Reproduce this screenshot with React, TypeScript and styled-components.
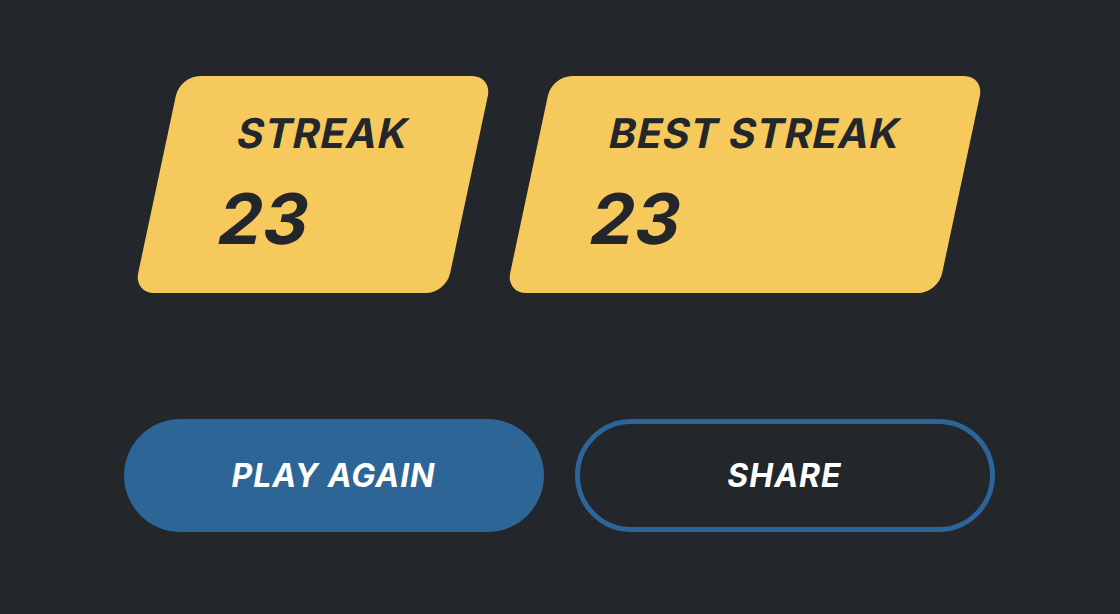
import styled, { createGlobalStyle } from "styled-components";

const GlobalStyle = createGlobalStyle`
  html, body {
    margin: 0;
    padding: 0;
    background: #23262b;
  }
  body {
    font-family: Inter, "Noto Sans", "Liberation Sans", sans-serif;
  }
`;

const Screen = styled.main`
  min-height: 614px;
  display: flex;
  flex-direction: column;
  align-items: center;
  padding-top: 76px;
  box-sizing: border-box;
`;

const StatsRow = styled.section`
  display: flex;
  gap: 60px;
  margin-left: -2px;
`;

/* slanted yellow tile, the text leans with it */
const StatCard = styled.div`
  display: flex;
  flex-direction: column;
  gap: 30px;
  padding: 37px 71px 39px 70px;
  background: #f6c95c;
  border-radius: 20px;
  transform: skewX(-12deg);
  color: #23262b;
`;

const StatLabel = styled.span`
  font-size: 41px;
  line-height: 1;
  font-weight: 700;
  letter-spacing: 0.8px;
  white-space: nowrap;
`;

const StatValue = styled.span`
  font-size: 70px;
  line-height: 1;
  font-weight: 700;
  letter-spacing: 0.5px;
`;

const Actions = styled.section`
  display: flex;
  gap: 31px;
  margin-top: 126px;
  margin-left: -2px;
`;

const ActionButton = styled.button<{ $outline?: boolean }>`
  width: 420px;
  height: 113px;
  border-radius: 57px;
  box-sizing: border-box;
  border: ${(p) => (p.$outline ? "5px solid #2b6599" : "none")};
  background: ${(p) => (p.$outline ? "transparent" : "#2c6596")};
  color: #ffffff;
  font-family: inherit;
  font-size: 32px;
  font-weight: 700;
  font-style: italic;
  letter-spacing: 1px;
  cursor: pointer;
`;

export default function App() {
  return (
    <>
      <GlobalStyle />
      <Screen>
        <StatsRow>
          <StatCard>
            <StatLabel>STREAK</StatLabel>
            <StatValue>23</StatValue>
          </StatCard>
          <StatCard>
            <StatLabel>BEST STREAK</StatLabel>
            <StatValue>23</StatValue>
          </StatCard>
        </StatsRow>
        <Actions>
          <ActionButton>PLAY AGAIN</ActionButton>
          <ActionButton $outline>SHARE</ActionButton>
        </Actions>
      </Screen>
    </>
  );
}
